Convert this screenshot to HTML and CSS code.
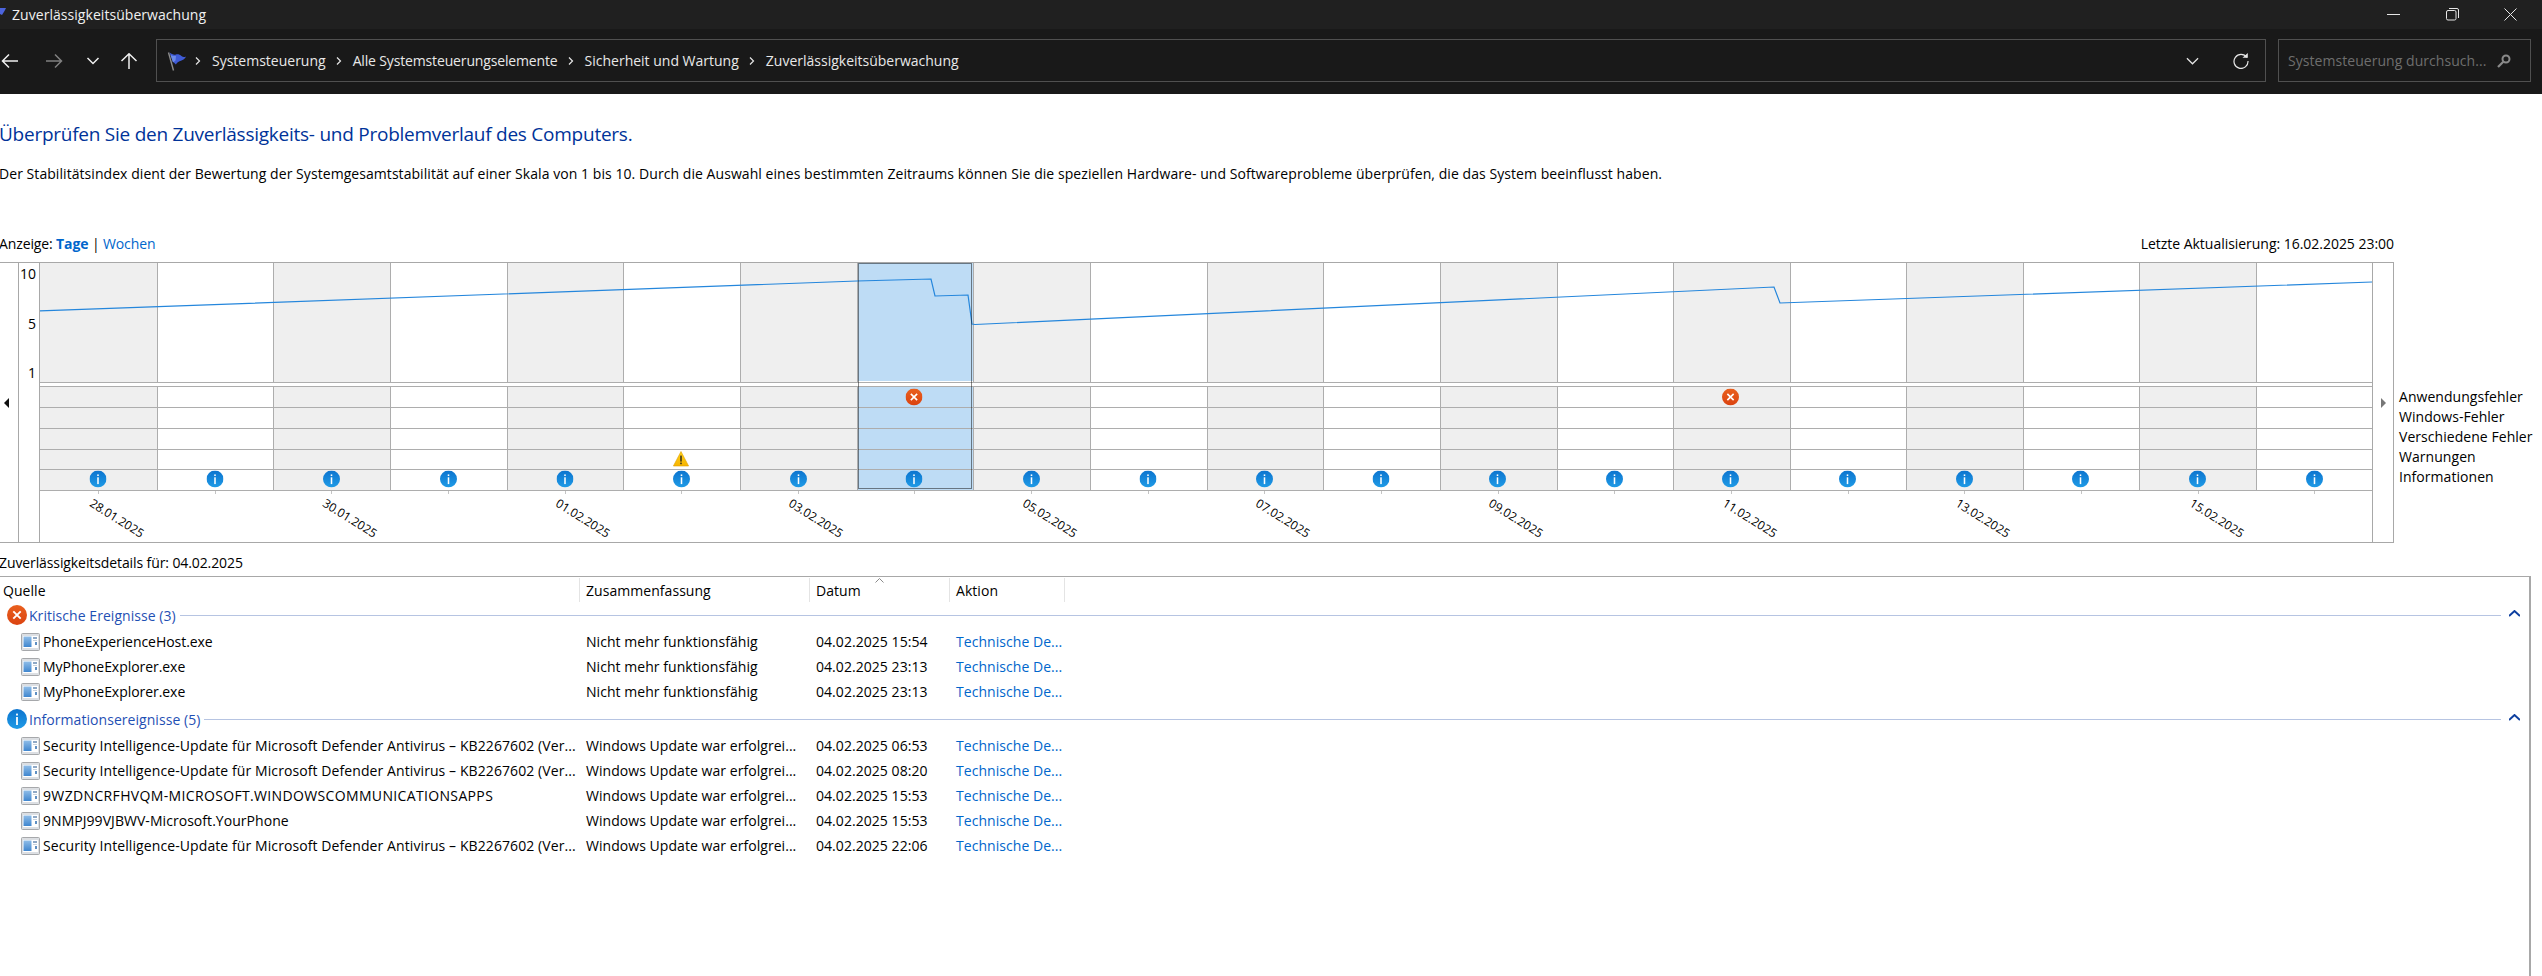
FILE: index.html
```html
<!DOCTYPE html>
<html lang="de">
<head>
<meta charset="utf-8">
<title>Zuverlässigkeitsüberwachung</title>
<link rel="stylesheet" href="styles.css">
</head>
<body>
<svg class="defs" aria-hidden="true">
  <defs>
    <linearGradient id="gInfo" x1="0" y1="0" x2="0" y2="1"><stop offset="0" stop-color="#0c74cf"/><stop offset="1" stop-color="#1f9be6"/></linearGradient>
    <linearGradient id="gErr" x1="0" y1="0" x2="0" y2="1"><stop offset="0" stop-color="#e9601f"/><stop offset="1" stop-color="#db4310"/></linearGradient>
    <linearGradient id="gWarn" x1="0" y1="0" x2="0" y2="1"><stop offset="0" stop-color="#ffd21a"/><stop offset="1" stop-color="#f6b400"/></linearGradient>
    <linearGradient id="gApp" x1="0" y1="0" x2="0" y2="1"><stop offset="0" stop-color="#8fbde8"/><stop offset="1" stop-color="#3f86cf"/></linearGradient>
    <symbol id="info" viewBox="0 0 20 20"><circle cx="10" cy="10" r="10" fill="url(#gInfo)"/><rect x="9.1" y="8" width="1.8" height="8" fill="#fff"/><rect x="9.1" y="4.6" width="1.8" height="1.9" fill="#fff"/></symbol>
    <symbol id="error" viewBox="0 0 20 20"><circle cx="10" cy="10" r="10" fill="url(#gErr)"/><path d="M6.3 6.3l7.4 7.4M13.7 6.3l-7.4 7.4" stroke="#fff" stroke-width="1.9" fill="none"/></symbol>
    <symbol id="warn" viewBox="0 0 16 16"><path d="M8 .5L15.6 15H.4z" fill="url(#gWarn)" stroke="#e0a000" stroke-width=".6" stroke-linejoin="round"/><rect x="7.3" y="4.6" width="1.4" height="6" fill="#222"/><rect x="7.3" y="11.6" width="1.4" height="1.6" fill="#222"/></symbol>
    <symbol id="app" viewBox="0 0 19 18"><rect x=".5" y=".5" width="18" height="17" rx="1" fill="#dcdfe3" stroke="#a6a8ab"/><rect x="2" y="3" width="15" height="12" fill="#fff"/><rect x="2.5" y="3.5" width="8" height="10.5" fill="url(#gApp)"/><rect x="12" y="4" width="4" height="2" fill="#8fa9c6"/><rect x="12" y="7" width="4" height="1" fill="#c9d3de"/><rect x="14" y="9" width="2" height="3" fill="#5f8fc2"/></symbol>
    <symbol id="flag" viewBox="0 0 20 20"><path d="M1.5 1.5L6.5 19.5" stroke="#8d8d8d" stroke-width="1.4" fill="none"/><path d="M2.6 1.6C5 3.5 7 4 9 3.4c2-.5 4 .3 5.5 1.5 1 .7 2.4 1.2 4.5.9-1.1 2-2.8 3.3-5 4-2 .6-3.8 1.7-5.1 3.7L5.800 10.500 2.600 1.600z" fill="#3f5bd6"/><path d="M3.400 3.400C5 5 7 5 9 5l-.5 4.500L6 11.500z" fill="#6c8ae8"/></symbol>
  </defs>
</svg>

<header class="titlebar">
  <svg class="title-flag" viewBox="0 0 6 7" aria-hidden="true"><path d="M0 0h6L4.500 3 2 7 0 6z" fill="#4c64de"/></svg>
  <span class="title-text">Zuverlässigkeitsüberwachung</span>
  <div class="win-controls">
    <span class="win-btn"><svg width="13" height="13" viewBox="0 0 13 13"><path d="M0 6.500h13" stroke="#e6e6e6" fill="none"/></svg></span>
    <span class="win-btn"><svg width="13" height="13" viewBox="0 0 13 13"><rect x=".5" y="2.500" width="9.500" height="9.500" rx="1.500" stroke="#e6e6e6" fill="none"/><path d="M3 .5h8a1.500 1.500 0 0 1 1.500 1.500v8" stroke="#e6e6e6" fill="none"/></svg></span>
    <span class="win-btn"><svg width="13" height="13" viewBox="0 0 13 13"><path d="M.5.5l12 12M12.500.5l-12 12" stroke="#e6e6e6" fill="none"/></svg></span>
  </div>
</header>

<nav class="navbar">
  <svg class="nav-icon back" viewBox="0 0 18 16"><path d="M17 8H1.500M8 1.500L1.500 8 8 14.500" stroke="#f0f0f0" stroke-width="1.500" fill="none"/></svg>
  <svg class="nav-icon forward" viewBox="0 0 18 16"><path d="M1 8h15.500M10 1.500L16.500 8 10 14.500" stroke="#808080" stroke-width="1.500" fill="none"/></svg>
  <svg class="nav-icon recent" viewBox="0 0 18 16"><path d="M3.500 5l5.500 5.500L14.500 5" stroke="#f0f0f0" stroke-width="1.500" fill="none"/></svg>
  <svg class="nav-icon up" viewBox="0 0 18 16"><path d="M9 16V1M1.500 8L9 .8 16.500 8" stroke="#f0f0f0" stroke-width="1.500" fill="none"/></svg>
  <div class="address">
    <svg class="addr-flag"><use href="#flag"/></svg>
    <svg class="crumb-sep" viewBox="0 0 6 8"><path d="M1 .5L4.500 4 1 7.500" stroke="#e6e6e6" stroke-width="1.200" fill="none"/></svg>
    <span class="crumb">Systemsteuerung</span>
    <svg class="crumb-sep" viewBox="0 0 6 8"><path d="M1 .5L4.500 4 1 7.500" stroke="#e6e6e6" stroke-width="1.200" fill="none"/></svg>
    <span class="crumb crumb-long">Alle Systemsteuerungselemente</span>
    <svg class="crumb-sep" viewBox="0 0 6 8"><path d="M1 .5L4.500 4 1 7.500" stroke="#e6e6e6" stroke-width="1.200" fill="none"/></svg>
    <span class="crumb">Sicherheit und Wartung</span>
    <svg class="crumb-sep" viewBox="0 0 6 8"><path d="M1 .5L4.500 4 1 7.500" stroke="#e6e6e6" stroke-width="1.200" fill="none"/></svg>
    <span class="crumb">Zuverlässigkeitsüberwachung</span>
    <svg class="addr-down" viewBox="0 0 14 8"><path d="M1 1l6 6 6-6" stroke="#e6e6e6" stroke-width="1.300" fill="none"/></svg>
    <svg class="addr-refresh" viewBox="0 0 16 16"><path d="M13.800 4.500A7 7 0 1 0 15 8" stroke="#e6e6e6" stroke-width="1.200" fill="none"/><path d="M9.500 4.800h5.300V0z" fill="#e6e6e6"/></svg>
  </div>
  <div class="search">
    <span class="search-text">Systemsteuerung durchsuch...</span>
    <svg class="search-icon" viewBox="0 0 14 14"><circle cx="9" cy="5" r="3.500" stroke="#8a8a8a" stroke-width="2" fill="none"/><path d="M6.300 7.700L1 13" stroke="#8a8a8a" stroke-width="2.200" fill="none"/></svg>
  </div>
</nav>

<main class="content">
  <h1 class="heading">Überprüfen Sie den Zuverlässigkeits- und Problemverlauf des Computers.</h1>
  <p class="intro">Der Stabilitätsindex dient der Bewertung der Systemgesamtstabilität auf einer Skala von 1 bis 10. Durch die Auswahl eines bestimmten Zeitraums können Sie die speziellen Hardware- und Softwareprobleme überprüfen, die das System beeinflusst haben.</p>

  <div class="chart-head">
    <span class="view-switch">Anzeige: <a class="link strong">Tage</a> | <a class="link">Wochen</a></span>
    <span class="updated">Letzte Aktualisierung: 16.02.2025 23:00</span>
  </div>

  <section class="chart-row">
    <div class="chart-frame">
      <div class="arrow-cell"><span class="tri tri-left"></span></div>
      <div class="y-axis"><span>10</span><span>5</span><span>1</span></div>
      <svg class="plot" viewBox="40 263 2332 279">
        <g class="col-shade">
          <rect x="39" y="262" width="118" height="120"/><rect x="273" y="262" width="117" height="120"/><rect x="507" y="262" width="116" height="120"/><rect x="740" y="262" width="117" height="120"/><rect x="973" y="262" width="117" height="120"/><rect x="1207" y="262" width="116" height="120"/><rect x="1440" y="262" width="117" height="120"/><rect x="1673" y="262" width="117" height="120"/><rect x="1906" y="262" width="117" height="120"/><rect x="2139" y="262" width="117" height="120"/>
          <rect x="39" y="386" width="118" height="104"/><rect x="273" y="386" width="117" height="104"/><rect x="507" y="386" width="116" height="104"/><rect x="740" y="386" width="117" height="104"/><rect x="973" y="386" width="117" height="104"/><rect x="1207" y="386" width="116" height="104"/><rect x="1440" y="386" width="117" height="104"/><rect x="1673" y="386" width="117" height="104"/><rect x="1906" y="386" width="117" height="104"/><rect x="2139" y="386" width="117" height="104"/>
        </g>
        <g class="selected">
          <rect x="857" y="262" width="116" height="119"/>
          <rect x="857" y="387" width="116" height="103"/>
        </g>
        <path class="grid" d="M157.500 262V382M273.500 262V382M390.500 262V382M507.500 262V382M623.500 262V382M740.500 262V382M857.500 262V382M973.500 262V382M1090.500 262V382M1207.500 262V382M1323.500 262V382M1440.500 262V382M1557.500 262V382M1673.500 262V382M1790.500 262V382M1906.500 262V382M2023.500 262V382M2139.500 262V382M2256.500 262V382M157.500 386V490M273.500 386V490M390.500 386V490M507.500 386V490M623.500 386V490M740.500 386V490M857.500 386V490M973.500 386V490M1090.500 386V490M1207.500 386V490M1323.500 386V490M1440.500 386V490M1557.500 386V490M1673.500 386V490M1790.500 386V490M1906.500 386V490M2023.500 386V490M2139.500 386V490M2256.500 386V490"/>
        <path class="grid" d="M39 382.500H2372M39 386.500H2372M39 407.500H2372M39 428.500H2372M39 449.500H2372M39 469.500H2372M39 490.500H2372"/>
        <path class="grid ticks" d="M98.500 491V494M215.500 491V494M331.500 491V494M448.500 491V494M565.500 491V494M681.500 491V494M798.500 491V494M914.500 491V494M1031.500 491V494M1148.500 491V494M1264.500 491V494M1381.500 491V494M1498.500 491V494M1614.500 491V494M1731.500 491V494M1848.500 491V494M1964.500 491V494M2081.500 491V494M2198.500 491V494M2314.500 491V494"/>
        <polyline class="stab-line" points="39,311 857,281 931,279 935,296 968,295 972,324 975,324.500 1774,287 1780,303 2372,282"/>
        <rect class="focus" x="858.500" y="263.500" width="113" height="225"/>
        <use href="#error" x="905.500" y="388.500" width="17" height="17"/>
        <use href="#error" x="1722" y="388.500" width="17" height="17"/>
        <use href="#warn" x="673" y="451" width="16" height="16"/>
        <use href="#info" x="89.500" y="470.500" width="17" height="17"/>
        <use href="#info" x="206.500" y="470.500" width="17" height="17"/>
        <use href="#info" x="323" y="470.500" width="17" height="17"/>
        <use href="#info" x="440" y="470.500" width="17" height="17"/>
        <use href="#info" x="556.500" y="470.500" width="17" height="17"/>
        <use href="#info" x="673" y="470.500" width="17" height="17"/>
        <use href="#info" x="790" y="470.500" width="17" height="17"/>
        <use href="#info" x="905.500" y="470.500" width="17" height="17"/>
        <use href="#info" x="1023" y="470.500" width="17" height="17"/>
        <use href="#info" x="1139.500" y="470.500" width="17" height="17"/>
        <use href="#info" x="1256" y="470.500" width="17" height="17"/>
        <use href="#info" x="1372.500" y="470.500" width="17" height="17"/>
        <use href="#info" x="1489" y="470.500" width="17" height="17"/>
        <use href="#info" x="1606" y="470.500" width="17" height="17"/>
        <use href="#info" x="1722" y="470.500" width="17" height="17"/>
        <use href="#info" x="1839" y="470.500" width="17" height="17"/>
        <use href="#info" x="1956" y="470.500" width="17" height="17"/>
        <use href="#info" x="2072" y="470.500" width="17" height="17"/>
        <use href="#info" x="2189" y="470.500" width="17" height="17"/>
        <use href="#info" x="2306" y="470.500" width="17" height="17"/>
        <g class="dates">
          <text x="117" y="518" transform="rotate(32 117 518)">28.01.2025</text>
          <text x="350" y="518" transform="rotate(32 350 518)">30.01.2025</text>
          <text x="583" y="518" transform="rotate(32 583 518)">01.02.2025</text>
          <text x="816" y="518" transform="rotate(32 816 518)">03.02.2025</text>
          <text x="1050" y="518" transform="rotate(32 1050 518)">05.02.2025</text>
          <text x="1283" y="518" transform="rotate(32 1283 518)">07.02.2025</text>
          <text x="1516" y="518" transform="rotate(32 1516 518)">09.02.2025</text>
          <text x="1750" y="518" transform="rotate(32 1750 518)">11.02.2025</text>
          <text x="1983" y="518" transform="rotate(32 1983 518)">13.02.2025</text>
          <text x="2217" y="518" transform="rotate(32 2217 518)">15.02.2025</text>
        </g>
      </svg>
      <div class="arrow-cell end"><span class="tri tri-right"></span></div>
    </div>
    <ul class="legend">
      <li>Anwendungsfehler</li>
      <li>Windows-Fehler</li>
      <li>Verschiedene Fehler</li>
      <li>Warnungen</li>
      <li>Informationen</li>
    </ul>
  </section>

  <div class="details-label">Zuverlässigkeitsdetails für: 04.02.2025</div>

  <section class="events">
    <div class="row head-row">
      <div class="cell src">Quelle</div>
      <div class="cell sum">Zusammenfassung</div>
      <div class="cell date">Datum<svg class="sort" viewBox="0 0 9 5"><path d="M.5 4.500l4-4 4 4" stroke="#8a8a8a" fill="none"/></svg></div>
      <div class="cell act">Aktion</div>
    </div>

    <div class="group first">
      <svg class="group-icon"><use href="#error"/></svg>
      <span class="group-name">Kritische Ereignisse (3)</span>
      <span class="group-line"></span>
      <svg class="collapse" viewBox="0 0 11 7"><path d="M0 6l5.500-5L11 6" stroke="#0d3f9f" stroke-width="2" fill="none"/></svg>
    </div>
    <div class="row"><div class="cell src"><svg class="app-icon"><use href="#app"/></svg><span class="name">PhoneExperienceHost.exe</span></div><div class="cell sum">Nicht mehr funktionsfähig</div><div class="cell date">04.02.2025 15:54</div><a class="cell act link">Technische De...</a></div>
    <div class="row"><div class="cell src"><svg class="app-icon"><use href="#app"/></svg><span class="name">MyPhoneExplorer.exe</span></div><div class="cell sum">Nicht mehr funktionsfähig</div><div class="cell date">04.02.2025 23:13</div><a class="cell act link">Technische De...</a></div>
    <div class="row"><div class="cell src"><svg class="app-icon"><use href="#app"/></svg><span class="name">MyPhoneExplorer.exe</span></div><div class="cell sum">Nicht mehr funktionsfähig</div><div class="cell date">04.02.2025 23:13</div><a class="cell act link">Technische De...</a></div>

    <div class="group">
      <svg class="group-icon"><use href="#info"/></svg>
      <span class="group-name">Informationsereignisse (5)</span>
      <span class="group-line"></span>
      <svg class="collapse" viewBox="0 0 11 7"><path d="M0 6l5.500-5L11 6" stroke="#0d3f9f" stroke-width="2" fill="none"/></svg>
    </div>
    <div class="row"><div class="cell src"><svg class="app-icon"><use href="#app"/></svg><span class="update">Security Intelligence-Update für Microsoft Defender Antivirus – KB2267602 (Ver...</span></div><div class="cell sum">Windows Update war erfolgrei...</div><div class="cell date">04.02.2025 06:53</div><a class="cell act link">Technische De...</a></div>
    <div class="row"><div class="cell src"><svg class="app-icon"><use href="#app"/></svg><span class="update">Security Intelligence-Update für Microsoft Defender Antivirus – KB2267602 (Ver...</span></div><div class="cell sum">Windows Update war erfolgrei...</div><div class="cell date">04.02.2025 08:20</div><a class="cell act link">Technische De...</a></div>
    <div class="row"><div class="cell src"><svg class="app-icon"><use href="#app"/></svg><span class="caps">9WZDNCRFHVQM-MICROSOFT.WINDOWSCOMMUNICATIONSAPPS</span></div><div class="cell sum">Windows Update war erfolgrei...</div><div class="cell date">04.02.2025 15:53</div><a class="cell act link">Technische De...</a></div>
    <div class="row"><div class="cell src"><svg class="app-icon"><use href="#app"/></svg><span>9NMPJ99VJBWV-Microsoft.YourPhone</span></div><div class="cell sum">Windows Update war erfolgrei...</div><div class="cell date">04.02.2025 15:53</div><a class="cell act link">Technische De...</a></div>
    <div class="row"><div class="cell src"><svg class="app-icon"><use href="#app"/></svg><span class="update">Security Intelligence-Update für Microsoft Defender Antivirus – KB2267602 (Ver...</span></div><div class="cell sum">Windows Update war erfolgrei...</div><div class="cell date">04.02.2025 22:06</div><a class="cell act link">Technische De...</a></div>
  </section>
</main>
</body>
</html>
```
FILE: styles.css
```css
* { box-sizing: border-box; }
html, body { margin: 0; padding: 0; height: 976px; overflow: hidden; background: #fff; }
body { font-family: "Open Sans", "Noto Sans", sans-serif; font-size: 14px; color: #000; letter-spacing: 0.05px; }
.defs { position: absolute; width: 0; height: 0; }

/* title bar */
.titlebar { height: 29px; background: #202020; color: #f0f0f0; display: flex; align-items: center; }
.title-flag { width: 6px; height: 7px; margin-top: -6px; }
.title-text { margin-left: 6px; }
.win-controls { margin-left: auto; display: flex; padding-right: 2px; }
.win-btn { width: 58.5px; height: 29px; display: flex; align-items: center; justify-content: center; }

/* navigation bar */
.navbar { height: 65px; background: #191919; display: flex; align-items: center; color: #e8e8e8; padding-right: 11px; }
.nav-icon { width: 18px; height: 16px; flex: none; margin-top: -2px; }
.back { margin-left: 1px; margin-right: 26px; }
.forward { margin-right: 21px; }
.recent { margin-right: 18px; }
.up { margin-right: 18px; }
.address { flex: 1; height: 43px; align-self: flex-start; margin-top: 10px; border: 1px solid #505050; display: flex; align-items: center; padding-left: 10px; padding-right: 16px; }
.addr-flag { width: 20px; height: 20px; margin-right: 8px; }
.crumb-sep { width: 6px; height: 8px; flex: none; margin-right: 11px; }
.crumb { margin-right: 10px; letter-spacing: 0; }
.crumb-long { letter-spacing: -0.15px; }
.addr-down { width: 13px; height: 8px; margin-left: auto; margin-right: 34px; }
.addr-refresh { width: 16px; height: 16px; }
.search { width: 253px; height: 43px; align-self: flex-start; margin-top: 10px; margin-left: 12px; border: 1px solid #505050; display: flex; align-items: center; padding: 0 19px 0 9px; color: #6e6e6e; }
.search-text { white-space: nowrap; }
.search-icon { width: 14px; height: 14px; margin-left: auto; }

/* page text */
.content { height: 882px; }
.heading { margin: 28px 0 0 -1px; font-size: 19px; font-weight: 400; line-height: 24px; color: #003399; letter-spacing: -0.25px; }
.intro { margin: 18px 0 0 -1px; line-height: 20px; white-space: nowrap; letter-spacing: 0.06px; }
.chart-head { width: 2395px; margin: 50px 0 0 -1px; line-height: 20px; display: flex; justify-content: space-between; }
.view-switch { letter-spacing: -0.12px; }
.updated { letter-spacing: -0.03px; }
.link { color: #0066cc; text-decoration: none; }
.strong { font-weight: 700; }

/* chart */
.chart-row { display: flex; margin-top: 8px; }
.chart-frame { width: 2394px; height: 281px; flex: none; display: flex; border-top: 1px solid #a8a8a8; border-bottom: 1px solid #a8a8a8; }
.arrow-cell { width: 19px; flex: none; display: flex; align-items: center; justify-content: center; border-right: 1px solid #a8a8a8; }
.arrow-cell.end { width: 22px; border-right: 1px solid #a8a8a8; border-left: 1px solid #a8a8a8; }
.tri { width: 0; height: 0; border-top: 5px solid transparent; border-bottom: 5px solid transparent; }
.tri-left { border-right: 5px solid #111; margin-right: 6px; }
.tri-right { border-left: 5px solid #777; }
.y-axis { width: 21px; flex: none; display: flex; flex-direction: column; align-items: flex-end; gap: 29.5px; padding: 1px 3px 0 0; border-right: 1px solid #a8a8a8; line-height: 20px; font-size: 14px; letter-spacing: 0; }
.plot { flex: none; width: 2332px; height: 279px; display: block; }
.col-shade rect { fill: #efefef; }
.selected rect { fill: #bedcf5; }
.grid { stroke: #adadad; stroke-width: 1; fill: none; }
.ticks { stroke: #c4c4c4; }
.stab-line { fill: none; stroke: #2486dc; stroke-width: 1.2; }
.focus { fill: none; stroke: #111; stroke-width: 1; stroke-dasharray: 1 1; }
.dates text { font-size: 12px; text-anchor: middle; dominant-baseline: central; fill: #000; letter-spacing: 0; }
.legend { list-style: none; margin: 0; padding: 125px 0 0 5px; line-height: 20px; white-space: nowrap; }

/* details table */
.details-label { margin: 10px 0 0 -1px; line-height: 20px; letter-spacing: -0.1px; }
.events { width: 2531px; height: 400px; margin-top: 3px; border-top: 1px solid #a8a8a8; border-right: 2px solid #a8a8a8; }
.row { display: flex; height: 25px; align-items: center; white-space: nowrap; }
.head-row { align-items: stretch; padding-top: 1px; }
.head-row .cell { display: flex; align-items: center; border-right: 1px solid #e4e4e4; }
.head-row .src { padding-left: 3px; }
.cell { flex: none; position: relative; }
.src { width: 580px; display: flex; align-items: center; padding-left: 21px; }
.sum { width: 230px; padding-left: 6px; }
.date { width: 140px; padding-left: 6px; }
.act { width: 115px; padding-left: 6px; }
.sort { position: absolute; left: 65px; top: 0; width: 9px; height: 5px; }
.app-icon { width: 19px; height: 18px; margin-right: 3px; flex: none; }
.name { letter-spacing: -0.05px; }
.update { letter-spacing: 0.09px; }
.caps { letter-spacing: 0.35px; }
.group { height: 26px; display: flex; align-items: center; padding-left: 7px; margin: 2px 0 1px; color: #1f50b4; }
.group.first { margin-top: 0; }
.group-icon { width: 20px; height: 20px; flex: none; margin-right: 2px; }
.group-line { width: 0; flex: 1; height: 1px; background: #b6c4e2; margin: 0 8px 0 4px; }
.collapse { width: 11px; height: 7px; margin-right: 9px; margin-top: -3px; flex: none; }
```
